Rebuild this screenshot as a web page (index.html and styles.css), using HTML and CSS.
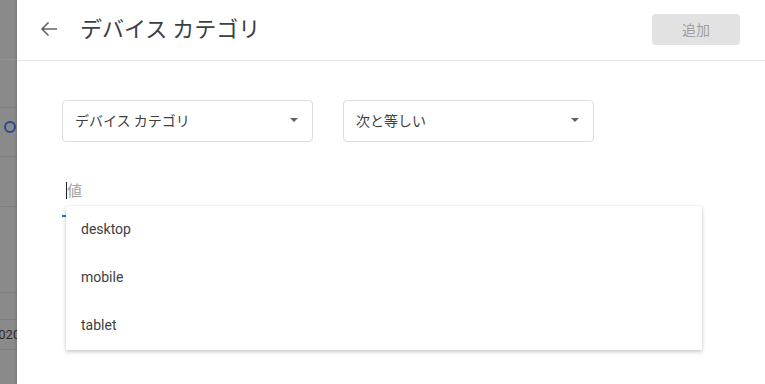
FILE: index.html
```html
<!DOCTYPE html>
<html lang="ja">
<head>
<meta charset="utf-8">
<link rel="stylesheet" href="styles.css">
</head>
<body>
<div class="backdrop">
  <div class="bd-row r1"></div>
  <div class="bd-row r2"></div>
  <div class="bd-row r3"><span class="ring"></span></div>
  <div class="bd-row r4"></div>
  <div class="bd-row r5"></div>
  <div class="bd-row r6"></div>
  <div class="bd-row r7"><span class="bd-text">2020</span></div>
  <div class="bd-row r8"></div>
  <div class="shade"></div>
</div>
<div class="panel">
  <header class="header">
    <svg class="back" width="18" height="18" viewBox="0 0 18 18"><path d="M17 9H2M8.5 2.5L2 9l6.5 6.5" fill="none" stroke="#5f6368" stroke-width="1.6"/></svg>
    <h1 class="title">デバイス カテゴリ</h1>
    <button class="add">追加</button>
  </header>
  <main class="content">
    <div class="selects">
      <div class="select"><span>デバイス カテゴリ</span><span class="caret"></span></div>
      <div class="select"><span>次と等しい</span><span class="caret"></span></div>
    </div>
    <div class="field">
      <div class="input"><span class="cursor"></span><span class="ph">値</span></div>
      <div class="underline"></div>
      <ul class="menu">
        <li>desktop</li>
        <li>mobile</li>
        <li>tablet</li>
      </ul>
    </div>
  </main>
</div>
</body>
</html>
```
FILE: styles.css
```css
* { box-sizing: border-box; }
html, body { margin: 0; padding: 0; height: 384px; overflow: hidden; }
body {
  display: flex;
  font-family: Roboto, "Noto Sans CJK JP", sans-serif;
  color: #3c4043;
  background: #fff;
}
.backdrop {
  width: 17px;
  flex: none;
  background: #8a8a8a;
  display: flex;
  flex-direction: column;
  position: relative;
  overflow: hidden;
}
.bd-row { border-bottom: 1px solid #7f7f7f; display: flex; align-items: center; flex: none; }
.r1 { height: 60px; border-bottom-color: #939393; }
.r2 { height: 48px; }
.r3 { height: 49px; align-items: flex-start; padding-top: 13px; }
.r4 { height: 50px; }
.r5 { height: 86px; }
.r6 { height: 27px; }
.r7 { height: 30px; }
.r8 { flex: 1; border-bottom: 0; }
.ring {
  width: 12px; height: 12px; flex: none;
  border: 2px solid #274a8c;
  border-radius: 50%;
  margin-left: 4px;
}
.bd-text {
  font-family: Roboto, sans-serif;
  font-size: 13px;
  color: #2b2b2b;
  margin-left: -9px;
  white-space: nowrap;
}
.shade {
  position: absolute; top: 0; right: 0; bottom: 0; width: 3px;
  background: linear-gradient(to right, rgba(0,0,0,0), rgba(0,0,0,0.12));
}
.panel { flex: 1; display: flex; flex-direction: column; }
.header {
  height: 61px;
  border-bottom: 1px solid #e6e6e6;
  display: flex;
  align-items: center;
  padding: 0 25px 0 23px;
}
.back { flex: none; margin-bottom: 2px; }
.title {
  margin: 0 0 0 22px;
  font-family: "Noto Sans CJK JP", sans-serif;
  font-weight: 400;
  font-size: 22px;
  color: #3c4043;
  flex: 1;
  padding-bottom: 7px;
}
.add {
  width: 88px; height: 31px;
  border: 0; border-radius: 4px;
  background: #e2e2e2;
  color: #a0a0a0;
  font-family: "Noto Sans CJK JP", sans-serif;
  font-size: 14px;
  margin-bottom: 2px;
}
.content { padding: 39px 0 0 45px; }
.selects { display: flex; gap: 30px; }
.select {
  width: 251px; height: 42px;
  border: 1px solid #dadce0;
  border-radius: 4px;
  display: flex; align-items: center; justify-content: space-between;
  padding: 0 13px 2px 12px;
  font-family: "Noto Sans CJK JP", sans-serif;
  font-size: 14px;
  color: #3c4043;
}
.caret {
  width: 0; height: 0;
  border-left: 4px solid transparent;
  border-right: 4px solid transparent;
  border-top: 4px solid #5f6368;
  margin-right: 1px;
}
.field { position: relative; margin-top: 38px; width: 640px; }
.input { display: flex; align-items: center; height: 20px; padding-left: 4px; }
.cursor { width: 1px; height: 17px; background: #202124; }
.ph {
  font-family: "Noto Sans CJK JP", sans-serif;
  font-size: 15px;
  color: #a0a0a0;
  margin-bottom: 2px;
}
.underline { margin-top: 15px; height: 2px; width: 4px; background: #1a73e8; }
.menu {
  position: absolute;
  left: 4px; top: 26px;
  width: 636px;
  margin: 0; padding: 0;
  list-style: none;
  background: #fff;
  box-shadow: 0 2px 4px rgba(0,0,0,0.2), 0 0 2px rgba(0,0,0,0.08);
}
.menu li {
  height: 48px;
  display: flex; align-items: center;
  padding-left: 15px;
  padding-bottom: 2px;
  font-size: 14px;
  color: #3c4043;
}
```
